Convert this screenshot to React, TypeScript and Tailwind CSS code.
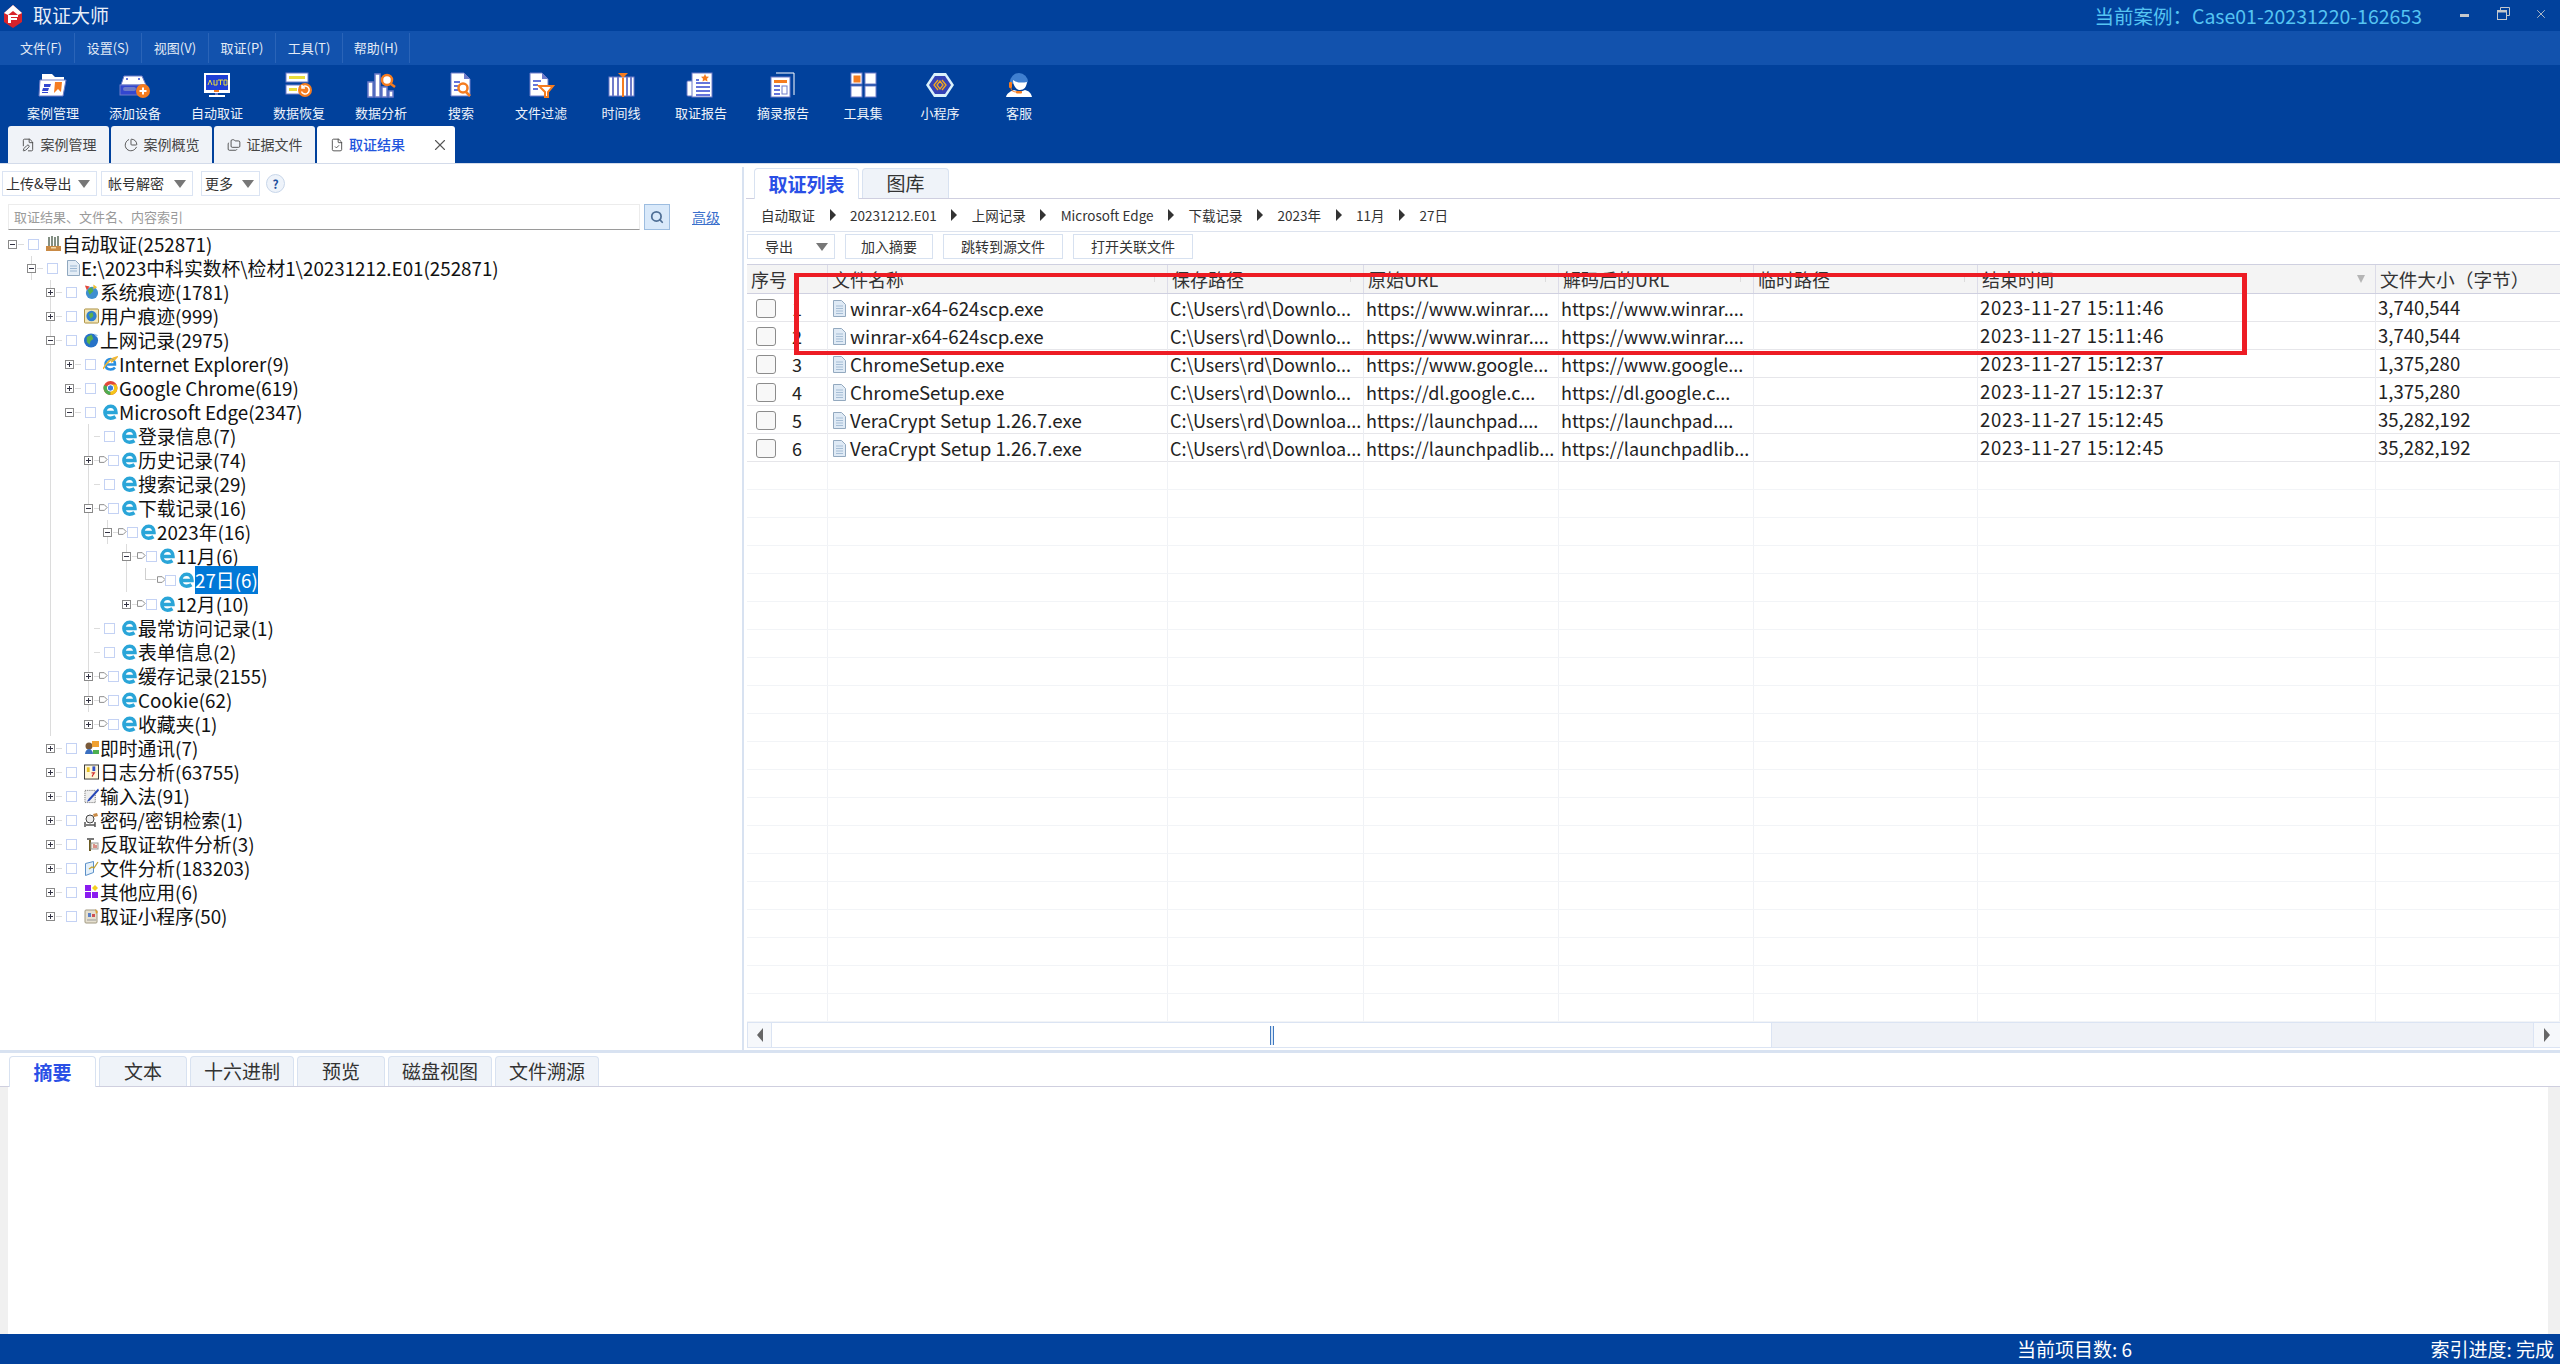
import { ChartPie, FileCheck, FilePen, Folders, Search, X } from "lucide-react";
import type { ReactNode } from "react";

const menus = ["文件(F)", "设置(S)", "视图(V)", "取证(P)", "工具(T)", "帮助(H)"];

const W = "#ffffff";
const L = "#6f7cc9";
const O = "#f57c1f";
const B = "#3347cf";
const Y = "#e9dc3c";

const toolIcons: Record<string, ReactNode> = {
  folder: (
    <>
      <path d="M5 2h10l3 3h9v5H5z" fill={W} />
      <path d="M3 8h26l-3 16H2z" fill={W} stroke={L} />
      <path d="M7 12h7l-1 3H7zM6 16h6l-1 3H5zM5 20h6v1H5z" fill={B} />
      <path d="M18 10h7l-1 10-3-3-4 4z" fill={O} />
    </>
  ),
  disk: (
    <>
      <path d="M5 4h18l4 9H2z" fill={W} stroke={L} />
      <circle cx="8" cy="7" r="1" fill={B} />
      <circle cx="20" cy="7" r="1" fill={B} />
      <rect x="1" y="13" width="24" height="10" fill={B} stroke={L} />
      <rect x="4" y="15" width="13" height="4" rx="2" fill={L} />
      <circle cx="24" cy="19" r="7" fill={O} />
      <path d="M24 15.5v7M20.5 19h7" stroke={W} strokeWidth="2" />
    </>
  ),
  auto: (
    <>
      <rect x="3" y="1" width="26" height="20" fill={W} />
      <rect x="5" y="3" width="22" height="15" fill="#1f3fd6" />
      <path d="M7 13l2-5 2 5M13 8v5h3V8M17 8h5M19.500 8v5M23 8h3v5h-3z" stroke={Y} fill="none" strokeWidth="1" />
      <rect x="13" y="18" width="5" height="2" fill={O} />
      <rect x="14" y="21" width="3" height="2" fill={L} />
      <rect x="8" y="23" width="16" height="2" fill={W} />
    </>
  ),
  restore: (
    <>
      <rect x="3" y="1" width="22" height="9" fill={W} stroke={L} />
      <rect x="6" y="4" width="16" height="3" fill={Y} />
      <rect x="3" y="13" width="14" height="9" fill={W} stroke={L} />
      <rect x="6" y="16" width="8" height="3" fill={Y} />
      <circle cx="22" cy="18" r="7" fill={O} />
      <path d="M19 15.500a4 4 0 1 1-.5 4M19 13v3h3" stroke={W} fill="none" strokeWidth="1.500" />
    </>
  ),
  chart: (
    <>
      <rect x="3" y="10" width="5" height="15" fill={W} stroke={L} strokeWidth="1.500" />
      <rect x="10" y="2" width="5" height="23" fill={W} stroke={L} strokeWidth="1.500" />
      <rect x="17" y="15" width="5" height="10" fill={W} stroke={L} strokeWidth="1.500" />
      <rect x="24" y="19" width="4" height="6" fill={W} stroke={L} strokeWidth="1.500" />
      <circle cx="22" cy="8" r="5" fill={W} stroke={O} strokeWidth="2.500" />
      <path d="M26 12l4 3" stroke={O} strokeWidth="2.500" />
    </>
  ),
  search: (
    <>
      <path d="M6 1h13l6 6v17H6z" fill={W} stroke={L} />
      <path d="M19 1v6h6z" fill={L} />
      <path d="M9 10h6M9 14h4M9 18h4" stroke={B} strokeWidth="1.500" />
      <circle cx="18" cy="16" r="4.500" fill={W} stroke={O} strokeWidth="2.500" />
      <path d="M21 20l4 4" stroke={O} strokeWidth="2.500" />
    </>
  ),
  filter: (
    <>
      <path d="M5 1h12l6 6v17H5z" fill={W} stroke={L} />
      <path d="M17 1v6h6z" fill={L} />
      <path d="M8 9h8M8 13h5M8 17h5" stroke={B} strokeWidth="1.500" />
      <path d="M14 14h14l-5 6v5h-3v-5z" fill={W} stroke={O} strokeWidth="2" />
    </>
  ),
  timeline: (
    <>
      <rect x="4" y="5" width="25" height="19" fill={W} stroke={L} />
      <path d="M8 5v19M13 5v19M22 5v19M26 5v19" stroke={L} strokeWidth="2" />
      <rect x="17" y="6" width="2" height="19" fill={O} />
      <path d="M13 1h10l-5 5z" fill={O} />
    </>
  ),
  report: (
    <>
      <rect x="2" y="9" width="8" height="15" rx="1" fill={W} stroke={L} />
      <rect x="7" y="1" width="20" height="24" fill={W} stroke={L} />
      <path d="M11 8h3M11 11h14M11 15h14M11 19h14M11 23h14" stroke={B} strokeWidth="1.500" />
      <path d="M20 2l1.200 2.500 2.800.3-2 1.900.5 2.800-2.500-1.300-2.500 1.300.5-2.800-2-1.900 2.800-.3z" fill={O} />
    </>
  ),
  excerpt: (
    <>
      <path d="M9 1h18v22" fill="none" stroke={W} />
      <rect x="4" y="5" width="19" height="20" fill={W} stroke={L} />
      <rect x="7" y="8" width="13" height="3" fill={O} />
      <path d="M7 14h6M7 18h6M7 22h6" stroke={B} strokeWidth="1.500" />
      <rect x="15" y="14" width="5" height="8" fill={W} stroke={L} />
    </>
  ),
  tools: (
    <>
      <rect x="4" y="1" width="11" height="11" fill={W} stroke={L} />
      <rect x="6.500" y="3.500" width="7" height="7" fill={O} />
      <rect x="18" y="1" width="11" height="11" fill={W} stroke={L} />
      <rect x="4" y="14" width="11" height="11" fill={W} stroke={L} />
      <rect x="18" y="14" width="11" height="11" fill={W} stroke={L} />
    </>
  ),
  mini: (
    <>
      <path d="M10 1h12l8 12-8 12H10L2 13z" fill="#d9f2fb" />
      <path d="M11 4h10l6 9-6 9H11l-6-9z" fill="#3443b6" />
      <path d="M14 8l-4 5 4 5M18 8l4 5-4 5M16 9l-3 4 3 4 3-4z" stroke="#f2a71e" fill="none" strokeWidth="1.300" />
    </>
  ),
  service: (
    <>
      <path d="M7 10a9 9 0 0 1 18 0l-3 2H10z" fill="#3f7fd0" />
      <path d="M10 8c4 3 9 3 14 2-.5 5-3 8-7 8s-7-5-7-10z" fill={W} />
      <path d="M3 25c1-4 5-6 8-7l6 2 5-2c4 1 6 3 7 7z" fill={W} />
      <rect x="6" y="10" width="3" height="6" rx="1" fill={O} />
      <path d="M8 16c0 3 3 4 6 4" stroke={O} fill="none" />
      <rect x="13" y="19" width="6" height="2.500" rx="1" fill={O} />
    </>
  ),
};

const tools = [
  { label: "案例管理", icon: "folder", w: "w-[82px]" },
  { label: "添加设备", icon: "disk", w: "w-[82px]" },
  { label: "自动取证", icon: "auto", w: "w-[82px]" },
  { label: "数据恢复", icon: "restore", w: "w-[82px]" },
  { label: "数据分析", icon: "chart", w: "w-[82px]" },
  { label: "搜索", icon: "search", w: "w-[78px]" },
  { label: "文件过滤", icon: "filter", w: "w-[82px]" },
  { label: "时间线", icon: "timeline", w: "w-[78px]" },
  { label: "取证报告", icon: "report", w: "w-[82px]" },
  { label: "摘录报告", icon: "excerpt", w: "w-[82px]" },
  { label: "工具集", icon: "tools", w: "w-[78px]" },
  { label: "小程序", icon: "mini", w: "w-[76px]" },
  { label: "客服", icon: "service", w: "w-[82px]" },
];

const EdgeE = () => (
  <svg width="15" height="16" viewBox="0 0 15 16">
    <path d="M3 8.500h10C13 4.500 10.800 2.300 7.800 2.300 4.300 2.300 1.900 5.200 1.900 8.500s2.300 5.700 5.600 5.700c2 0 3.500-.4 5-1.400" fill="none" stroke="#2aa5d8" strokeWidth="3.500" />
  </svg>
);

const treeIcons: Record<string, ReactNode> = {
  edge: <EdgeE />,
  box: (
    <svg width="15" height="16" viewBox="0 0 15 16">
      <path d="M3 1v9M6 0v10M9 1v9M12 0v10" stroke="#5b6b5b" strokeWidth="1.500" />
      <path d="M0 10h15v5H0z" fill="#c98a45" />
      <path d="M5 11h5v1.500H5z" fill="#f3d9a8" />
    </svg>
  ),
  doc: (
    <svg width="14" height="16" viewBox="0 0 14 16">
      <path d="M1.500.5h8l4 4v11h-12z" fill="#e4edf6" stroke="#90a8c0" />
      <path d="M4 6h7M4 8.500h7M4 11h7" stroke="#9cb7d2" />
    </svg>
  ),
  sys: (
    <svg width="16" height="16" viewBox="0 0 16 16">
      <circle cx="8.500" cy="9" r="6.500" fill="#3f8fd0" />
      <path d="M4 6l4-3 2 4-4 4z" fill="#55b04a" />
      <path d="M1 1l5 1-3 4z" fill="#e2483a" />
      <path d="M10 0l4 3-4 2z" fill="#f0c030" />
    </svg>
  ),
  user: (
    <svg width="16" height="16" viewBox="0 0 16 16">
      <rect x=".5" y=".5" width="15" height="15" rx="1" fill="#f2e6b8" stroke="#a98c3a" />
      <circle cx="8" cy="8" r="5.500" fill="#2f7fd0" />
      <path d="M5 6l4-2 1 4-3 3z" fill="#5fb04a" />
    </svg>
  ),
  globe: (
    <svg width="16" height="16" viewBox="0 0 16 16">
      <circle cx="7.500" cy="8.500" r="7.500" fill="#2672c8" />
      <path d="M3 5l5-3 2 5-3 2-1 4-3-3z" fill="#5bb04c" />
      <path d="M11 1l4 2-2 2z" fill="#9fc8e8" />
    </svg>
  ),
  ie: (
    <svg width="15" height="16" viewBox="0 0 15 16">
      <path d="M2.500 8.500h9.500C12 5 10 3 7.500 3S2.500 5 2.500 8.500s2 5 5 5c2 0 3.500-.6 4.500-2" fill="none" stroke="#2b8fe0" strokeWidth="2.500" />
      <path d="M0 13C4 6 9 2 14 1c-2 3-4 4-6 5" fill="none" stroke="#f2b632" strokeWidth="1.500" />
    </svg>
  ),
  chrome: (
    <svg width="15" height="16" viewBox="0 0 15 16">
      <circle cx="7.500" cy="8" r="7" fill="#e2483a" />
      <path d="M7.500 8L1.500 11.500A7 7 0 0 0 7.500 15z" fill="#4caf50" />
      <path d="M7.500 8v7a7 7 0 0 0 6-10.500H7.500z" fill="#f5c518" />
      <path d="M7.500 8L1.500 11.500A7 7 0 0 1 1 5z" fill="#4caf50" />
      <circle cx="7.500" cy="8" r="3.200" fill="#3a7fdc" stroke="#fff" />
    </svg>
  ),
  chat: (
    <svg width="15" height="16" viewBox="0 0 15 16">
      <circle cx="5" cy="6" r="3.500" fill="#7a5a3a" />
      <path d="M1 14c0-3 2-5 4-5s4 2 4 5z" fill="#3a6fc0" />
      <rect x="8" y="1" width="7" height="6" fill="#f0a030" />
      <path d="M9 10h6v4H9z" fill="#4caf50" />
    </svg>
  ),
  log: (
    <svg width="16" height="16" viewBox="0 0 16 16">
      <rect x=".5" y=".5" width="15" height="15" fill="#fff6d8" stroke="#333" />
      <rect x="3" y="3" width="3" height="5" fill="#e8c020" />
      <rect x="9" y="2" width="3" height="5" fill="#3050c8" />
      <path d="M8 9h3l-2 3v1" fill="none" stroke="#d03030" strokeWidth="1.300" />
    </svg>
  ),
  pen: (
    <svg width="16" height="16" viewBox="0 0 16 16">
      <rect x="1" y="2" width="11" height="13" fill="#eee" stroke="#666" strokeDasharray="1 1" />
      <path d="M15 0L5 11l-2 3 3-1L16 2z" fill="#2647b8" />
    </svg>
  ),
  key: (
    <svg width="15" height="16" viewBox="0 0 15 16">
      <circle cx="6" cy="7" r="4" fill="#eee" stroke="#444" />
      <path d="M9 2l4-1 1 3-4 1z" fill="#c98a45" />
      <path d="M2 13h9M1 10v5M11 10v5" stroke="#555" strokeWidth="1.500" />
    </svg>
  ),
  anti: (
    <svg width="14" height="16" viewBox="0 0 14 16">
      <path d="M2 2h7v2H2z" fill="#777" />
      <path d="M4 4h2v11H4z" fill="#6b5a20" />
      <rect x="6" y="7" width="7" height="6" fill="#f5f0e0" stroke="#999" />
      <path d="M9 8v4M11 9v3" stroke="#c03030" />
    </svg>
  ),
  file: (
    <svg width="15" height="16" viewBox="0 0 15 16">
      <path d="M1.500 3.500l8-2v11l-8 3z" fill="#e4f0fa" stroke="#5b90c8" />
      <path d="M5 9l3-2 2 1 4-6" fill="none" stroke="#c0a030" strokeWidth="1.300" />
    </svg>
  ),
  apps: (
    <svg width="14" height="16" viewBox="0 0 14 16">
      <rect x="0" y="1" width="6" height="6" fill="#8a1cf0" />
      <rect x="0" y="8" width="6" height="6" fill="#8a1cf0" />
      <rect x="7" y="8" width="6" height="6" fill="#8a1cf0" />
      <path d="M10 1l3 3-3 3-3-3z" fill="#f5d020" />
    </svg>
  ),
  mini: (
    <svg width="15" height="16" viewBox="0 0 15 16">
      <rect x="1" y="2" width="12" height="13" rx="1" fill="#e6e0d0" stroke="#a09880" />
      <rect x="4" y="5" width="3" height="4" fill="#5b80c8" />
      <rect x="8" y="6" width="3" height="3" fill="#d05050" />
      <path d="M3 12h9" stroke="#999" />
      <path d="M11 1l3 3-2 2z" fill="#e0a030" />
    </svg>
  ),
};

type Node = {
  level: number;
  text: string;
  icon: string;
  exp?: "plus" | "minus";
  arrow?: boolean;
  sel?: boolean;
  guides?: number[];
  elbow?: boolean;
};

const tree: Node[] = [
  { level: 0, text: "自动取证(252871)", icon: "box", exp: "minus" },
  { level: 1, text: "E:\\2023中科实数杯\\检材1\\20231212.E01(252871)", icon: "doc", exp: "minus", guides: [31] },
  { level: 2, text: "系统痕迹(1781)", icon: "sys", exp: "plus", guides: [50] },
  { level: 2, text: "用户痕迹(999)", icon: "user", exp: "plus", guides: [50] },
  { level: 2, text: "上网记录(2975)", icon: "globe", exp: "minus", guides: [50] },
  { level: 3, text: "Internet Explorer(9)", icon: "ie", exp: "plus", guides: [50] },
  { level: 3, text: "Google Chrome(619)", icon: "chrome", exp: "plus", guides: [50] },
  { level: 3, text: "Microsoft Edge(2347)", icon: "edge", exp: "minus", guides: [50] },
  { level: 4, text: "登录信息(7)", icon: "edge", guides: [50, 88] },
  { level: 4, text: "历史记录(74)", icon: "edge", exp: "plus", arrow: true, guides: [50, 88] },
  { level: 4, text: "搜索记录(29)", icon: "edge", guides: [50, 88] },
  { level: 4, text: "下载记录(16)", icon: "edge", exp: "minus", arrow: true, guides: [50, 88] },
  { level: 5, text: "2023年(16)", icon: "edge", exp: "minus", arrow: true, guides: [50, 88, 107] },
  { level: 6, text: "11月(6)", icon: "edge", exp: "minus", arrow: true, guides: [50, 88, 126] },
  { level: 7, text: "27日(6)", icon: "edge", arrow: true, sel: true, guides: [50, 88, 126], elbow: true },
  { level: 6, text: "12月(10)", icon: "edge", exp: "plus", arrow: true, guides: [50, 88] },
  { level: 4, text: "最常访问记录(1)", icon: "edge", guides: [50, 88] },
  { level: 4, text: "表单信息(2)", icon: "edge", guides: [50, 88] },
  { level: 4, text: "缓存记录(2155)", icon: "edge", exp: "plus", arrow: true, guides: [50, 88] },
  { level: 4, text: "Cookie(62)", icon: "edge", exp: "plus", arrow: true, guides: [50, 88] },
  { level: 4, text: "收藏夹(1)", icon: "edge", exp: "plus", arrow: true, guides: [50] },
  { level: 2, text: "即时通讯(7)", icon: "chat", exp: "plus" },
  { level: 2, text: "日志分析(63755)", icon: "log", exp: "plus" },
  { level: 2, text: "输入法(91)", icon: "pen", exp: "plus" },
  { level: 2, text: "密码/密钥检索(1)", icon: "key", exp: "plus" },
  { level: 2, text: "反取证软件分析(3)", icon: "anti", exp: "plus" },
  { level: 2, text: "文件分析(183203)", icon: "file", exp: "plus" },
  { level: 2, text: "其他应用(6)", icon: "apps", exp: "plus" },
  { level: 2, text: "取证小程序(50)", icon: "mini", exp: "plus" },
];

function TreeRow({ node }: { node: Node }) {
  return (
    <div className="relative flex h-6 items-center whitespace-nowrap text-[18.8px] text-[#111]">
      {node.guides?.map((x) => (
        <span key={x} className="absolute top-0 h-6 w-px bg-[#dcdcdc]" style={{ left: x }} />
      ))}
      {node.elbow && <span className="absolute left-[145px] top-0 h-3 w-[11px] border-b border-l border-[#cfcfcf]" />}
      <span className="shrink-0" style={{ width: 8 + node.level * 19 }} />
      <span className={`relative flex shrink-0 items-center ${node.arrow ? "w-6" : "w-5"}`}>
        {node.exp ? (
          <span className="relative z-10 flex h-[9px] w-[9px] items-center justify-center border border-[#8a8a8a] bg-white">
            <span className="h-px w-[5px] bg-[#334]" />
            {node.exp === "plus" && <span className="absolute h-[5px] w-px bg-[#334]" />}
          </span>
        ) : (
          <span className="w-[9px]" />
        )}
        {!node.elbow && <span className="ml-px h-px w-[6px] bg-[#dcdcdc]" />}
        {node.arrow && (
          <svg width="9" height="8" viewBox="0 0 9 8" className={node.elbow ? "ml-[7px]" : "ml-0"}>
            <path d="M.5.500h5l3 3-3 3h-5z" fill="#fff" stroke="#888" />
          </svg>
        )}
      </span>
      <span className="h-[11px] w-[11px] shrink-0 border border-[#c4d2f4] bg-white" />
      <span className={`flex w-[15px] shrink-0 justify-center ${node.arrow ? "ml-[3px]" : "ml-[7px]"}`}>{treeIcons[node.icon]}</span>
      <span className={`ml-px ${node.sel ? "bg-[#0078d7] text-white" : ""}`}>{node.text}</span>
    </div>
  );
}

const columns = [
  { label: "文件名称" },
  { label: "保存路径" },
  { label: "原始URL" },
  { label: "解码后的URL" },
  { label: "临时路径" },
  { label: "结束时间", sort: true },
];

const rows = [
  ["winrar-x64-624scp.exe", "C:\\Users\\rd\\Downlo...", "https://www.winrar....", "https://www.winrar....", "2023-11-27 15:11:46", "3,740,544"],
  ["winrar-x64-624scp.exe", "C:\\Users\\rd\\Downlo...", "https://www.winrar....", "https://www.winrar....", "2023-11-27 15:11:46", "3,740,544"],
  ["ChromeSetup.exe", "C:\\Users\\rd\\Downlo...", "https://www.google...", "https://www.google...", "2023-11-27 15:12:37", "1,375,280"],
  ["ChromeSetup.exe", "C:\\Users\\rd\\Downlo...", "https://dl.google.c...", "https://dl.google.c...", "2023-11-27 15:12:37", "1,375,280"],
  ["VeraCrypt Setup 1.26.7.exe", "C:\\Users\\rd\\Downloa...", "https://launchpad....", "https://launchpad....", "2023-11-27 15:12:45", "35,282,192"],
  ["VeraCrypt Setup 1.26.7.exe", "C:\\Users\\rd\\Downloa...", "https://launchpadlib...", "https://launchpadlib...", "2023-11-27 15:12:45", "35,282,192"],
];

const gridCols = "grid grid-cols-[81px_340px_196px_195px_195px_224px_398px_184px]";

const FileIcon = () => (
  <svg width="13" height="17" viewBox="0 0 13 17" className="shrink-0">
    <path d="M.5.500h8l4 4v12H.5z" fill="#dfeaf5" stroke="#93a9bf" />
    <path d="M3 6h7M3 8.500h7M3 11h7M3 13.500h7" stroke="#a5bdd5" />
  </svg>
);

const Caret = () => <span className="h-0 w-0 border-x-[6px] border-t-[8px] border-x-transparent border-t-[#777]" />;
const Crumb = () => <span className="h-0 w-0 border-y-[6px] border-l-[6px] border-y-transparent border-l-[#333]" />;

function Tab({ label, active, w, large }: { label: string; active?: boolean; w: string; large?: boolean }) {
  return (
    <div
      className={`flex items-center justify-center rounded-t-[4px] border border-b-0 border-[#d8e2f1] ${w} ${large ? "h-[31px]" : "h-[30px]"} text-[19px] ${
        active ? "-mb-px bg-white font-bold text-[#2a4fe6]" : "bg-[#eff3f9] text-[#333]"
      }`}
    >
      {label}
    </div>
  );
}

const crumbs = ["自动取证", "20231212.E01", "上网记录", "Microsoft Edge", "下载记录", "2023年", "11月", "27日"];

export default function App() {
  return (
    <div className="flex h-screen w-screen flex-col overflow-hidden bg-white [font-family:'Noto_Sans_CJK_SC','Noto_Sans',sans-serif]">
      {/* title bar */}
      <div className="flex h-[31px] shrink-0 items-center bg-[#01419c]">
        <svg width="22" height="24" viewBox="0 0 22 24" className="ml-[2px]">
          <path d="M11 1l9 8v9l-9 6-9-6V9z" fill="#d8232a" />
          <path d="M11 1l9 8-4 2-5-4-5 4-4-2z" fill="#fff" />
          <path d="M6 11h10v2H9v1h6v2H9v3H6z" fill="#fff" />
        </svg>
        <span className="ml-[9px] text-[19px] text-[#e8eef8]">取证大师</span>
        <span className="ml-auto text-[19.5px] text-[#55c4f2]">当前案例：Case01-20231220-162653</span>
        <div className="ml-[38px] flex items-center">
          <span className="h-[3px] w-[9px] bg-[#c4c8cc]" />
          <svg width="13" height="13" viewBox="0 0 13 13" className="ml-[28px] mb-[4px]">
            <path d="M3.500 3V.5h9v8H10" fill="none" stroke="#c4c8cc" />
            <rect x=".5" y="3.500" width="9" height="9" fill="none" stroke="#c4c8cc" />
            <rect x=".5" y="3.500" width="9" height="2" fill="#c4c8cc" />
          </svg>
          <X size={14} strokeWidth={1.5} className="ml-[24px] mr-[12px] mb-[4px] text-[#c4c8cc]" />
        </div>
      </div>

      {/* menu */}
      <div className="flex h-[34px] shrink-0 items-center bg-[#1252ad] pl-2">
        {menus.map((m) => (
          <div key={m} className="flex h-[30px] w-[67px] items-center justify-center border-r border-[#2a64b8] text-[13px] text-[#e3ebf6]">
            {m}
          </div>
        ))}
      </div>

      {/* toolbar and document tabs */}
      <div className="shrink-0 bg-[#01419c]">
        <div className="flex h-[61px] pl-3">
          {tools.map((t) => (
            <div key={t.label} className={`flex flex-col items-center pt-[7px] ${t.w}`}>
              <svg width="32" height="26" viewBox="0 0 32 26">
                {toolIcons[t.icon]}
              </svg>
              <span className="mt-[7px] text-[13px] leading-4 text-[#eef3fa]">{t.label}</span>
            </div>
          ))}
        </div>
        <div className="flex h-[37px] items-end gap-[2px] pl-2 text-[14px] text-[#444]">
          <div className="flex h-[37px] w-[101px] items-center justify-center gap-[6px] rounded-t-[3px] bg-[#f0f3f8]">
            <FilePen size={14} strokeWidth={1.5} />案例管理
          </div>
          <div className="flex h-[37px] w-[101px] items-center justify-center gap-[6px] rounded-t-[3px] bg-[#f0f3f8]">
            <ChartPie size={14} strokeWidth={1.5} />案例概览
          </div>
          <div className="flex h-[37px] w-[101px] items-center justify-center gap-[6px] rounded-t-[3px] bg-[#f0f3f8]">
            <Folders size={14} strokeWidth={1.5} />证据文件
          </div>
          <div className="flex h-[37px] w-[138px] items-center rounded-t-[3px] bg-white pl-[13px] font-medium text-[#2255dd]">
            <FileCheck size={14} strokeWidth={1.5} className="text-[#444]" />
            <span className="ml-[5px]">取证结果</span>
            <X size={18} strokeWidth={1.5} className="ml-[26px] text-[#555]" />
          </div>
        </div>
      </div>

      {/* main */}
      <div className="flex h-[887px] shrink-0 border-t border-[#d3dbea]">
        <div className="w-[742px] shrink-0 pt-[7px]">
          <div className="flex items-center pl-[2px] text-[14px] text-[#333]">
            <div className="flex h-[25px] w-[95px] items-center justify-between border border-[#dbe4f3] pl-[3px] pr-[6px]">
              上传&导出
              <Caret />
            </div>
            <div className="ml-1 flex h-[25px] w-[92px] items-center justify-between border border-[#dbe4f3] pl-[6px] pr-[6px]">
              帐号解密
              <Caret />
            </div>
            <div className="ml-2 flex h-[25px] w-[59px] items-center justify-between border border-[#dbe4f3] pl-[3px] pr-[5px]">
              更多
              <Caret />
            </div>
            <div className="ml-[6px] flex h-[19px] w-[19px] items-center justify-center rounded-full border border-[#c8d6ea] bg-[#eef3fa] text-[12px] font-bold text-[#1c4f9c]">
              ?
            </div>
          </div>
          <div className="mt-2 flex h-[26px] items-center pl-2">
            <div className="flex h-[26px] w-[632px] items-center border border-[#ececec] border-b-[#9a9a9a] pl-[5px] text-[13px] text-[#9a9a9a]">
              取证结果、文件名、内容索引
            </div>
            <div className="ml-[4px] flex h-[26px] w-[26px] items-center justify-center border border-[#9dbde0] bg-[#d9e9fa]">
              <Search size={14} strokeWidth={3} className="text-[#4f6f96]" />
            </div>
            <span className="ml-[22px] text-[14px] text-[#3a6fcc] underline">高级</span>
          </div>
          <div className="mt-[2px]">
            {tree.map((n) => (
              <TreeRow key={n.text} node={n} />
            ))}
          </div>
        </div>

        <div className="mt-[3px] w-[2px] shrink-0 bg-[#d8e2f1]" />

        <div className="ml-[2px] flex min-w-0 flex-1 flex-col pt-[4px]">
          <div className="flex h-[31px] items-end gap-[3px] border-b border-[#cfcfe0] pl-2">
            <Tab label="取证列表" active w="w-[105px]" large />
            <Tab label="图库" w="w-[87px]" />
          </div>
          <div className="flex h-[33px] items-center gap-[14.5px] border-b border-[#dde3ee] pl-[15px] text-[13.5px] text-[#333]">
            {crumbs.map((c, i) => (
              <div key={c} className="flex items-center gap-[14.5px]">
                {i > 0 && <Crumb />}
                {c}
              </div>
            ))}
          </div>
          <div className="flex pl-px pt-[2px] text-[14px] text-[#333]">
            <div className="flex h-[25px] w-[88px] items-center justify-between border border-[#d7e1f0] pl-[17px] pr-[6px]">
              导出
              <Caret />
            </div>
            <div className="ml-[10px] flex h-[25px] w-[88px] items-center justify-center border border-[#d7e1f0]">加入摘要</div>
            <div className="ml-[10px] flex h-[25px] w-[120px] items-center justify-center border border-[#d7e1f0]">跳转到源文件</div>
            <div className="ml-[10px] flex h-[25px] w-[120px] items-center justify-center border border-[#d7e1f0]">打开关联文件</div>
          </div>

          {/* table */}
          <div className="relative ml-px mt-[5px]">
            <div className={`${gridCols} h-[30px] border-y border-[#cfd0e0] bg-[#f4f4f4] text-[18px] text-[#333]`}>
              <div className="flex items-center border-r border-[#dcdce8] pl-[4px]">序号</div>
              {columns.map((c) => (
                <div key={c.label} className="flex items-center justify-between border-r border-[#dcdce8] pl-[4px] pr-[12px]">
                  {c.label}
                  {c.sort ? (
                    <span className="mr-[-2px] h-0 w-0 border-x-[4px] border-t-[8px] border-x-transparent border-t-[#b5b5b5]" />
                  ) : (
                    <span className="h-[6px] w-px bg-[#dcdcdc]" />
                  )}
                </div>
              ))}
              <div className="flex items-center whitespace-nowrap pl-[4px] text-[18.7px]">文件大小（字节）</div>
            </div>
            {rows.map((r, i) => (
              <div key={i} className={`${gridCols} h-7 border-b border-[#e6e6ea] text-[18px] text-[#222]`}>
                <div className="flex items-center border-r border-[#ebedf2] pl-[9px]">
                  <span className="h-[19px] w-5 rounded-[3px] border border-[#8c8c8c] bg-[#f8f8f8]" />
                  <span className="ml-4">{i + 1}</span>
                </div>
                <div className="flex items-center gap-[4px] border-r border-[#ebedf2] pl-[5px] text-[18.7px]">
                  <FileIcon />
                  {r[0]}
                </div>
                <div className="flex items-center overflow-hidden whitespace-nowrap border-r border-[#ebedf2] pl-[2px]">{r[1]}</div>
                <div className="flex items-center overflow-hidden whitespace-nowrap border-r border-[#ebedf2] pl-[2px]">{r[2]}</div>
                <div className="flex items-center overflow-hidden whitespace-nowrap border-r border-[#ebedf2] pl-[2px]">{r[3]}</div>
                <div className="border-r border-[#ebedf2]" />
                <div className="flex items-center border-r border-[#ebedf2] pl-[2px] text-[18.5px] tracking-[0.7px]">{r[4]}</div>
                <div className="flex items-center pl-[2px] text-[18.5px]">{r[5]}</div>
              </div>
            ))}
            {Array.from({ length: 20 }).map((_, i) => (
              <div key={i} className={`${gridCols} h-7 border-b border-[#f2f4f7]`}>
                {Array.from({ length: 8 }).map((_, j) => (
                  <div key={j} className="border-r border-[#f0f2f6]" />
                ))}
              </div>
            ))}
            {/* red annotation box drawn over the table */}
            <div className="absolute left-[47px] top-[9px] h-[82px] w-[1453px] border-x-[5px] border-y-[4px] border-[#ed1c24]" />
          </div>

          {/* horizontal scrollbar */}
          <div className="ml-px flex h-[26px] items-stretch border-y border-[#dbe4f3] bg-[#eef1f7]">
            <div className="flex w-[25px] items-center justify-center border-x border-[#dbe4f3] bg-[#f6f8fb]">
              <span className="h-0 w-0 border-y-[7px] border-r-[6px] border-y-transparent border-r-[#666]" />
            </div>
            <div className="flex w-[1000px] items-center justify-center border-r border-[#dbe4f3] bg-white">
              <span className="h-[19px] w-[4px] border-x border-[#3f78c0] bg-[#dbe8f6]" />
            </div>
            <div className="flex-1" />
            <div className="flex w-[27px] items-center justify-center border-l border-[#dbe4f3] bg-[#f6f8fb]">
              <span className="h-0 w-0 border-y-[7px] border-l-[6px] border-y-transparent border-l-[#666]" />
            </div>
          </div>
        </div>
      </div>

      {/* bottom panel */}
      <div className="h-[3px] shrink-0 bg-[#d8e2f1]" />
      <div className="flex h-[34px] shrink-0 items-end gap-[3px] border-b border-[#cfcfdf] pl-[9px]">
        <Tab label="摘要" active w="w-[87px]" large />
        <Tab label="文本" w="w-[88px]" />
        <Tab label="十六进制" w="w-[104px]" />
        <Tab label="预览" w="w-[88px]" />
        <Tab label="磁盘视图" w="w-[104px]" />
        <Tab label="文件溯源" w="w-[104px]" />
      </div>
      <div className="flex min-h-0 flex-1">
        <div className="w-2 bg-[#f0f0f0]" />
        <div className="flex-1" />
        <div className="w-3 bg-[#f0f0f0]" />
      </div>

      {/* status bar */}
      <div className="flex h-[30px] shrink-0 items-center bg-[#01419c] text-[19px] text-white">
        <span className="ml-[2017px]">当前项目数: 6</span>
        <span className="ml-auto mr-[6px]">索引进度: 完成</span>
      </div>
    </div>
  );
}
